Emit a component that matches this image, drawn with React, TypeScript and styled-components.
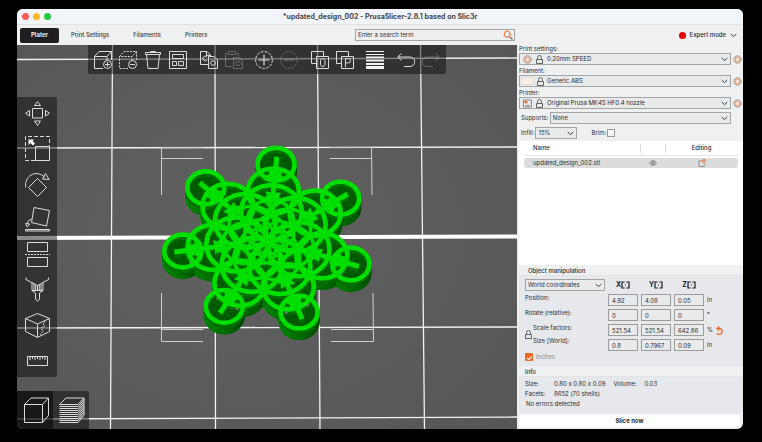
import React from "react";
import styled, { createGlobalStyle } from "styled-components";

const GlobalStyle = createGlobalStyle`
  * { box-sizing: border-box; }
  body { margin: 0; background: #000; }
  body, button, input, select, table {
    font-family: Inter, "Liberation Sans", sans-serif;
    font-size: 6px;
    line-height: 8px;
    font-feature-settings: "calt" 0;
    color: #2b2c2e;
  }
  button, input, select { border: 0; margin: 0; padding: 0; background: none; outline: none; }
  svg { display: block; flex: none; }
`;

const Page = styled.div`
  min-height: 100vh;
  padding: 9px 19px 13px 17px;
  display: flex;
`;

const Window = styled.div`
  flex: 1;
  min-width: 0;
  display: flex;
  flex-direction: column;
  background: #eff0f2;
  border-radius: 6px;
  overflow: hidden;
`;

const TitleBar = styled.header`
  display: grid;
  grid-template-columns: 1fr auto 1fr;
  align-items: center;
  height: 16px;
  padding: 0 5px;
  background: #f1f4f9;
  border-bottom: 1px solid #dfe1e4;
`;

const Lights = styled.div`
  display: flex;
  gap: 4px;
`;

const Light = styled.span<{ $color: string }>`
  width: 7px;
  height: 7px;
  border-radius: 50%;
  background: ${(p) => p.$color};
`;

const Title = styled.h1`
  margin: 0;
  font-size: 7px;
  font-weight: 700;
  color: #45474b;
`;

const Columns = styled.div`
  display: grid;
  grid-template-columns: minmax(0, 1fr) 226px;
`;

const TabBar = styled(Columns)`
  height: 20px;
  align-items: center;
`;

const Tabs = styled.nav`
  display: flex;
  align-items: center;
  padding: 0 2px 0 3px;
`;

const Tab = styled.button<{ $active?: boolean }>`
  height: 15px;
  padding: 0 ${(p) => (p.$active ? 11 : 12)}px;
  border-radius: 2px;
  font-weight: ${(p) => (p.$active ? 600 : 500)};
  color: ${(p) => (p.$active ? "#fff" : "#3a3b3d")};
  background: ${(p) => (p.$active ? "#1f1f21" : "transparent")};
`;

const Field = styled.label<{ $width?: number }>`
  display: flex;
  align-items: center;
  gap: 4px;
  height: 12px;
  padding: 0 2px;
  border: 1px solid #a3a4a6;
  background: #e9eaeb;
  min-width: 0;
  ${(p) => (p.$width ? `width: ${p.$width}px;` : "flex: 1;")}
`;

const Search = styled(Field)`
  flex: none;
  margin-left: auto;
  background: #eeeff0;
  padding-right: 1px;
`;

const TextInput = styled.input`
  flex: 1;
  min-width: 0;
  &::placeholder { color: #2d2e30; opacity: 1; }
`;

const Select = styled.select`
  flex: 1;
  min-width: 0;
  appearance: none;
`;

const Mode = styled.button`
  display: flex;
  align-items: center;
  gap: 4px;
  justify-self: end;
  margin-right: 6px;
  font-weight: 500;
`;

const Dot = styled.span`
  width: 7px;
  height: 7px;
  border-radius: 50%;
  background: #e80000;
`;

const Main = styled(Columns)`
  flex: 1;
`;

const Viewport = styled.main`
  position: relative;
  overflow: hidden;
  background: #5b5b5b;
`;

const Scene = styled.svg`
  position: absolute;
  inset: 0;
  width: 100%;
  height: 100%;
`;

const Overlay = styled.div`
  position: absolute;
  display: flex;
  background: rgba(4, 4, 4, 0.46);
  svg { fill: none; stroke: #dcdcdc; stroke-width: 1; }
`;

const TopTools = styled(Overlay)`
  top: 0;
  left: 71px;
  width: 358px;
  height: 29px;
  padding: 0 6px;
  align-items: center;
  justify-content: space-between;
  border-radius: 0 0 2px 2px;
`;

const ToolGroup = styled.div`
  display: flex;
  gap: 7px;
`;

const Tool = styled.button<{ $size: number }>`
  width: ${(p) => p.$size}px;
  height: ${(p) => p.$size}px;
  &:disabled { opacity: 0.32; }
`;

const SideTools = styled(Overlay)`
  top: 52px;
  left: 0;
  width: 40px;
  height: 280px;
  padding: 4px 0;
  flex-direction: column;
  align-items: center;
  justify-content: space-between;
  border-radius: 0 2px 2px 0;
`;

const ViewTools = styled(Overlay)`
  left: 0;
  bottom: 0;
  border-radius: 0 2px 0 0;
`;

const ViewTool = styled.button<{ $active?: boolean }>`
  width: 36px;
  height: 38px;
  padding: 6px;
  background: ${(p) => (p.$active ? "rgba(0, 0, 0, 0.5)" : "transparent")};
`;

const Sidebar = styled.aside`
  display: flex;
  flex-direction: column;
  padding: 0 0 2px 2px;
  min-width: 0;
`;

const Presets = styled.section`
  display: flex;
  flex-direction: column;
  gap: 2px;
`;

const Preset = styled.div`
  display: grid;
  grid-template-columns: 1fr 12px;
`;

const PresetName = styled.label`
  grid-column: 1 / -1;
`;

const PresetField = styled(Field)<{ $wideIcon?: boolean }>`
  padding-left: ${(p) => (p.$wideIcon ? 1 : 3)}px;
  gap: ${(p) => (p.$wideIcon ? 3 : 4)}px;
`;

const IconButton = styled.button`
  display: grid;
  place-items: center;
`;

const Swatch = styled.span`
  width: 13px;
  height: 8px;
  background: #fdeee5;
  border: 1px solid #e6dcd6;
`;

const OptionRow = styled.div`
  display: flex;
  align-items: center;
  gap: 1px;
  margin-top: 3px;
  padding: 0 12px 0 2px;
`;

const BrimLabel = styled.label`
  margin-left: 13px;
`;

const Check = styled.input`
  appearance: none;
  width: 8px;
  height: 8px;
  background: #f4f4f5;
  border: 1px solid #999a9c;
`;

const ListPane = styled.section`
  flex: 1;
  margin-top: 2px;
  padding: 0 5px;
  background: #fff;
`;

const ObjectTable = styled.table`
  width: 100%;
  border-collapse: separate;
  border-spacing: 0;
  table-layout: fixed;
  tbody::before { content: ""; display: block; height: 2px; }
`;

const Head = styled.th<{ $width?: number; $divider?: boolean; $start?: boolean }>`
  height: 15px;
  padding: ${(p) => (p.$start ? "0 0 0 9px" : "0")};
  width: ${(p) => (p.$width ? `${p.$width}px` : "auto")};
  text-align: ${(p) => (p.$start ? "left" : "center")};
  font-weight: 500;
  border-bottom: 1px solid #e6e6e8;
  background: ${(p) =>
    p.$divider ? "linear-gradient(#dedede, #dedede) left center / 1px 9px no-repeat" : "none"};
`;

const ObjectRow = styled.tr`
  td {
    height: 10px;
    padding: 0;
    background: #dcdcdd;
  }
  td:first-child { padding-left: 9px; border-radius: 3px 0 0 3px; }
  td:last-child { border-radius: 0 3px 3px 0; }
  svg { margin: 0 auto; }
`;

const GroupTitle = styled.h2<{ $indent: number }>`
  margin: 2px 0 0;
  padding-left: ${(p) => p.$indent}px;
  font-size: 6px;
  line-height: 8px;
  font-weight: 500;
`;

const Group = styled.section`
  background: #e6e8eb;
  border: 1px solid #e2e4e7;
  border-right: 0;
  border-radius: 3px 0 0 3px;
  padding: 3px 5px 4px;
`;

const Manipulation = styled.div`
  display: grid;
  grid-template-columns: 80px 30px 30px 30px 1fr;
  column-gap: 3px;
  row-gap: 3px;
  align-items: center;
`;

const Name = styled.span`
  align-self: start;
`;

const Axis = styled.span`
  display: flex;
  align-items: center;
  justify-content: center;
  font-weight: 700;
  font-size: 7px;
  color: #1c1c1d;
`;

const NumberBox = styled.input`
  width: 100%;
  height: 12px;
  padding: 0 3px;
  border: 1px solid #9b9c9e;
  background: #e9eaec;
`;

const Unit = styled.span`
  display: flex;
  align-items: center;
  gap: 3px;
  height: 12px;
`;

const ScaleNames = styled.div`
  grid-row: span 2;
  align-self: start;
  display: flex;
  align-items: center;
  gap: 1px;
`;

const Stack = styled.div`
  display: flex;
  flex-direction: column;
  gap: 5px;
`;

const InchesLabel = styled.label`
  display: flex;
  align-items: center;
  gap: 3px;
  margin-top: 2px;
  color: #8b8c8f;
`;

const Tick = styled.input`
  appearance: none;
  width: 8px;
  height: 8px;
  border-radius: 1px;
  background: #ea6a25;
  display: grid;
  place-items: center;
  &::after {
    content: "";
    width: 4px;
    height: 2px;
    border: solid #fff;
    border-width: 0 0 1px 1px;
    transform: rotate(-45deg);
  }
`;

const Info = styled.dl`
  display: grid;
  grid-template-columns: 29px auto auto 1fr;
  row-gap: 2px;
  margin: 0;
  dt, dd { margin: 0; padding-right: 8px; white-space: nowrap; }
`;

const Status = styled.p`
  margin: 2px 0 0 1px;
`;

const Slice = styled.button`
  height: 12px;
  margin: 2px 3px 0 0;
  border-radius: 2px;
  background: #fff;
  font-weight: 700;
`;

const Chevron = () => (
  <svg width="7" height="5" viewBox="0 0 7 5" fill="none" stroke="#3b3c3e">
    <path d="M.7 1 3.5 3.6 6.3 1" />
  </svg>
);

const Lock = () => (
  <svg width="7" height="9" viewBox="0 0 7 9" fill="none" stroke="#626365">
    <path d="M1.600 4.500V2.400a1.900 1.900 0 0 1 3.800 0v2.100" />
    <path d="M.5 4.500h6v4h-6z" />
  </svg>
);

const Gear = () => (
  <svg width="9" height="9" viewBox="0 0 9 9" fill="none">
    <circle cx="4.500" cy="4.500" r="3.700" stroke="#86807c" strokeDasharray="1.500 .6" />
    <circle cx="4.500" cy="4.500" r="2.500" stroke="#ef9a6d" strokeWidth="1.200" fill="#f7e3d8" />
  </svg>
);

const PrinterGlyph = () => (
  <svg width="9" height="9" viewBox="0 0 9 9" fill="none" stroke="#858688">
    <path d="M.5 1h8v7h-8zM2.500 6.500h4" />
    <path d="M1.500 3.200h3" stroke="#ea6a25" strokeWidth="2.200" />
  </svg>
);

const SearchGlyph = () => (
  <svg width="10" height="10" viewBox="0 0 10 10" fill="none">
    <circle cx="4.200" cy="4.200" r="3" stroke="#ec8146" strokeWidth="1.200" />
    <path d="m6.200 6.200 1.600 1.600" stroke="#ec8146" strokeWidth="1.300" />
    <path d="m7.500 7.500 2 2" stroke="#6b6b6b" strokeWidth="1.300" />
  </svg>
);

const topGroups: { label: string; off?: boolean; art: React.ReactNode }[][] = [
  [
    {
      label: "Add",
      art: (
        <>
          <path d="M9 17.500H.5v-12h12.500v4M.5 5.500 5 .5h12.500L13 5.500M17.500.5V9" />
          <circle cx="13.500" cy="13.500" r="4" />
          <path d="M11 13.500h5M13.500 11v5" />
        </>
      ),
    },
    {
      label: "Delete",
      art: (
        <>
          <path strokeDasharray="2 1.200" d="M9 17.500H.5v-12h12.500v4M.5 5.500 5 .5h12.500L13 5.500M17.500.5V9" />
          <circle cx="13.500" cy="13.500" r="4" />
          <path d="M11 13.500h5" />
        </>
      ),
    },
    {
      label: "Delete all",
      art: <path d="M1.500 3.500h15v-2h-15zM6.500 1.500v-1h5v1M2.500 3.500l1.500 14h10l1.500-14" />,
    },
    {
      label: "Arrange",
      art: <path d="M.5.5h17v17H.5zM3.500 3.500h11v4h-11zM3.500 10.500h4v4h-4zM9.500 10.500h5v4h-5z" />,
    },
  ],
  [
    {
      label: "Copy",
      art: (
        <>
          <path d="M8.500 13.500h-8V.5h6.500l3.500 3.500v1.500M6.500.5v4h4M8.500 5.500h5.500l3.500 3.500v8.500h-9z" />
          <circle cx="13" cy="12" r="2.300" />
          <path d="M7 6a2.300 2.300 0 1 0 0 3" />
        </>
      ),
    },
    {
      label: "Paste",
      off: true,
      art: (
        <>
          <path d="M7.500 15.500h-7v-13h3M10.500 2.500h3v3M3.500.5h7v3h-7zM8.500 6.500h5.500l3.500 3v8h-9z" />
          <circle cx="13" cy="12.500" r="2.300" />
        </>
      ),
    },
  ],
  [
    {
      label: "Add instance",
      art: (
        <>
          <circle cx="9" cy="9" r="8.400" strokeDasharray="2.800 1.200" />
          <path d="M3.500 9h11M9 3.500v11" strokeWidth="1.200" />
        </>
      ),
    },
    {
      label: "Remove instance",
      off: true,
      art: (
        <>
          <circle cx="9" cy="9" r="8.400" strokeDasharray="2.800 1.200" />
          <path d="M3.500 9h11" strokeWidth="1.200" />
        </>
      ),
    },
  ],
  [
    {
      label: "Split to objects",
      art: (
        <>
          <path d="M5 12.500H.5V.5h12V5M5.500 5.500h12v12h-12z" />
          <rect x="9.500" y="7.500" width="4.500" height="8" rx="2.200" />
        </>
      ),
    },
    {
      label: "Split to parts",
      art: <path d="M5 12.500H.5V.5h12V5M5.500 5.500h12v12h-12zM9.500 16v-8.500h3q2 0 2 2.200t-2 2.200h-3" />,
    },
  ],
  [
    {
      label: "Variable layer height",
      art: (
        <g stroke="#f4f4f4">
          <path d="M0 .5h18M0 3.500h18" />
          <path strokeWidth="1.500" d="M0 6.250h18" />
          <path strokeWidth="2" d="M0 9.500h18M0 13h18" />
          <path strokeWidth="3" d="M0 16.500h18" />
        </g>
      ),
    },
  ],
  [
    { label: "Undo", art: <path d="M4.500 2.500.8 6l3.700 3.500M1 6h12a4.600 4.600 0 0 1 0 9.500H7" /> },
    { label: "Redo", off: true, art: <path d="m13.500 2.500 3.700 3.500-3.700 3.500M17 6H5a4.600 4.600 0 0 0 0 9.500h6" /> },
  ],
];

const sideTools: { label: string; art: React.ReactNode }[] = [
  {
    label: "Move",
    art: <path d="M7.500 7.500h10v9.500h-10zM9.500 4.500h6L12.500.5zM9.500 20h6l-3 4.500zM4.500 9.500V15l-4-2.750zM20.500 9.500V15l4-2.750z" />,
  },
  {
    label: "Scale",
    art: (
      <>
        <path strokeDasharray="4 2" d="M10 24.500H.5V.5h24V10" />
        <path d="M10.500 10.500h14v14h-14z" />
        <path fill="#fff" stroke="none" d="M3.500 3.500h5.500L7.500 5l2.500 2.500-2 2L5.500 7 3.500 9z" />
      </>
    ),
  },
  {
    label: "Rotate",
    art: <path d="M12.500 6.500 21.500 15.500l-9 9-9-9zM.7 15.500C-1 4 11-3 19.500 5M20.500 1.500 24 7.500l-6.500-.5z" />,
  },
  {
    label: "Place on face",
    art: <path d="M9 .5 24.500 3.500l-3 15.500L6.500 15.500zM.5 22.500h24v1.500H.5zM6.500 12Q2.500 13 2.200 17M.5 16.500l1.700 3.500 2.500-3z" />,
  },
  {
    label: "Cut",
    art: (
      <>
        <path d="M2.500.5h20v9h-20zM2.500 15.500h20v9h-20z" />
        <path strokeDasharray="2 1" d="M0 12.500h25" />
      </>
    ),
  },
  {
    label: "Paint-on supports",
    art: <path d="M1 .5v2L12.500 8.500 23.500 2.500v-2M7 5.500v8h11v-8M9 7v6M10.700 8v5M12.500 9v4M14.300 8v5M16 7v6M7 13.500l3.500 2.500v6q2 4 4 0v-6l3.500-2.500" />,
  },
  {
    label: "Seam painting",
    art: (
      <>
        <path d="M12.500.5 24.500 5.500V18.500l-12 6-12-6V5.500zM.5 5.500 12.500 11 24.500 5.500M12.500 11v13" />
        <path strokeDasharray="2 1" d="m20 8-2 3 2 2-4 2 2 3-3 4" />
      </>
    ),
  },
  {
    label: "Measure",
    art: <path d="M2.500 8.500h20v9h-20zM5 9v3M7.500 9v2M10 9v3M12.500 9v2M15 9v3M17.500 9v2M20 9v3" />,
  },
];

const CX = 268.5;
const CY = 240.5;
const TILT = 0.885;
const ARMS = Array.from({ length: 7 }, (_, i) => ((5 + (i * 360) / 7) * Math.PI) / 180);
const OUTLINE = [
  { d: 86.5, r: 18.5, w: 4.6 },
  { d: 56, r: 25.5, w: 4.6 },
  { d: 32, r: 30.5, w: 4.6 },
];
const RINGS = [...OUTLINE, { d: 23, r: 23, w: 3.4 }, { d: 14, r: 14, w: 2.6 }];

const point = (angle: number, d: number) => [CX + Math.sin(angle) * d, CY - Math.cos(angle) * d * TILT];

const star = (angle: number, d: number, long: number, short: number) =>
  Array.from({ length: 14 }, (_, k) => {
    const [x, y] = point(angle, d);
    const t = angle + (k * Math.PI) / 7;
    const r = k % 2 ? short : long;
    return `${(x + Math.sin(t) * r).toFixed(2)},${(y - Math.cos(t) * r * TILT).toFixed(2)}`;
  }).join(" ");

const Lattice = ({ color }: { color: string }) => (
  <g fill="none" stroke={color}>
    {ARMS.map((a) => {
      const [x1, y1] = point(a, 56);
      const [x2, y2] = point(a, 95);
      return (
        <g key={a}>
          {RINGS.map(({ d, r, w }) => {
            const [x, y] = point(a, d);
            return <ellipse key={d} cx={x} cy={y} rx={r} ry={r * TILT} strokeWidth={w} />;
          })}
          <path d={`M${x1} ${y1}L${x2} ${y2}`} strokeWidth="5" />
          <polygon points={star(a, 49, 10, 6)} fill={color} stroke="none" />
          <polygon points={star(a, 74, 9, 6)} fill={color} stroke="none" />
        </g>
      );
    })}
    <ellipse cx={CX} cy={CY} rx="5" ry="4.500" fill={color} stroke="none" />
  </g>
);

const Discs = ({ grow = 0, lift = 0, fill }: { grow?: number; lift?: number; fill: string }) => (
  <g transform={`translate(0 ${lift})`} fill={fill}>
    {ARMS.map((a) =>
      OUTLINE.map(({ d, r }) => {
        const [x, y] = point(a, d);
        return <ellipse key={`${a}-${d}`} cx={x} cy={y} rx={r + grow} ry={(r + grow) * TILT} />;
      })
    )}
  </g>
);

const Bed = () => (
  <Scene viewBox="17 45 500 384" preserveAspectRatio="xMidYMid slice" role="img" aria-label="Print bed">
    <defs>
      <radialGradient id="bed" cx=".45" cy=".5" r=".75">
        <stop offset="0" stopColor="#616161" />
        <stop offset="1" stopColor="#565656" />
      </radialGradient>
      <linearGradient id="wall">
        <stop offset="0" stopColor="#008600" />
        <stop offset=".5" stopColor="#006c00" />
        <stop offset="1" stopColor="#004a00" />
      </linearGradient>
    </defs>
    <rect x="17" y="45" width="500" height="384" fill="url(#bed)" />
    <g stroke="#f2f2f2" strokeWidth="1.300">
      <path d="M112.500 45 110.500 429M215 45l.5 384M317.500 45 320 429M420.500 45l4 384" />
      <path d="M17 59.500 517 58M17 148l500-1M17 328l500-1M17 419l500-2" />
      <path d="m17 238 500-1.500" strokeWidth="4" stroke="#fff" />
    </g>
    <g stroke="#cfcfcf" fill="none">
      <path d="M203 147.500h-41.500V195M161.500 158.500H203M330 147.500h41.500l.5 47.500M330 158.500h41.500" />
      <path d="M161.500 293v48.500H203M161.500 329.500H203M373 293l.5 48.500H331M331 329.500h42" />
    </g>
    {[10, 9, 8, 7, 6, 5, 4, 3, 2, 1].map((dy) => (
      <Discs key={dy} grow={2.1} lift={dy} fill="url(#wall)" />
    ))}
    <Discs fill="#005a00" />
    <g transform="translate(0 3)">
      <Lattice color="#006e00" />
    </g>
    <g fill="#747474">
      {ARMS.flatMap((a) =>
        [-0.14, 0.14].map((side) => {
          const [x, y] = point(a + side, 81);
          return <circle key={`${a}${side}`} cx={x} cy={y + 2} r="1.400" />;
        })
      )}
    </g>
    <Lattice color="#00df00" />
  </Scene>
);

const presets = [
  { id: "print", name: "Print settings:", value: "0.20mm SPEED", icon: <Gear /> },
  { id: "filament", name: "Filament:", value: "Generic ABS", icon: <Swatch /> },
  { id: "printer", name: "Printer:", value: "Original Prusa MK4S HF0.4 nozzle", icon: <PrinterGlyph /> },
];

const Values = ({ name, values, unit }: { name: string; values: string[]; unit: React.ReactNode }) => (
  <>
    {values.map((v, i) => (
      <NumberBox key={i} aria-label={`${name} ${"XYZ"[i]}`} defaultValue={v} />
    ))}
    <Unit>{unit}</Unit>
  </>
);

export default function App() {
  return (
    <Page>
      <GlobalStyle />
      <Window>
        <TitleBar>
          <Lights>
            <Light $color="#ff5c55" />
            <Light $color="#fdb927" />
            <Light $color="#27c840" />
          </Lights>
          <Title>*updated_design_002 - PrusaSlicer-2.8.1 based on Slic3r</Title>
        </TitleBar>
        <TabBar>
          <Tabs>
            <Tab $active>Plater</Tab>
            <Tab>Print Settings</Tab>
            <Tab>Filaments</Tab>
            <Tab>Printers</Tab>
            <Search $width={160}>
              <TextInput aria-label="Search" placeholder="Enter a search term" />
              <SearchGlyph />
            </Search>
          </Tabs>
          <Mode>
            <Dot />
            Expert mode
            <Chevron />
          </Mode>
        </TabBar>
        <Main>
          <Viewport>
            <Bed />
            <TopTools>
              {topGroups.map((group) => (
                <ToolGroup key={group[0].label}>
                  {group.map(({ label, off, art }) => (
                    <Tool key={label} $size={18} aria-label={label} disabled={off}>
                      <svg width="18" height="18" viewBox="0 0 18 18">{art}</svg>
                    </Tool>
                  ))}
                </ToolGroup>
              ))}
            </TopTools>
            <SideTools>
              {sideTools.map(({ label, art }) => (
                <Tool key={label} $size={25} aria-label={label}>
                  <svg width="25" height="25" viewBox="0 0 25 25">{art}</svg>
                </Tool>
              ))}
            </SideTools>
            <ViewTools>
              <ViewTool $active aria-label="3D editor view">
                <svg width="26" height="26" viewBox="0 0 26 26">
                  <path d="M1.500 7.500h18v18h-18zM1.500 7.500 8 1h17.500l-6 6.500M25.500 1v17.500l-6 7" />
                </svg>
              </ViewTool>
              <ViewTool aria-label="Preview">
                <svg width="26" height="26" viewBox="0 0 26 26">
                  <path d="M.5 7.500 7 1h18l-6 6.500zM25 1v17" />
                  {[9.5, 11.5, 13.5, 15.5, 17.5, 19.5, 21.5, 23.5, 25.5].map((y) => (
                    <path key={y} d={`M.5 ${y}H19l6-7`} />
                  ))}
                </svg>
              </ViewTool>
            </ViewTools>
          </Viewport>
          <Sidebar>
            <Presets>
              {presets.map(({ id, name, value, icon }) => (
                <Preset key={id}>
                  <PresetName htmlFor={id}>{name}</PresetName>
                  <PresetField as="div" $wideIcon={id === "filament"}>
                    {icon}
                    <Lock />
                    <Select id={id}>
                      <option>{value}</option>
                    </Select>
                    <Chevron />
                  </PresetField>
                  <IconButton aria-label={`Edit ${name}`}>
                    <Gear />
                  </IconButton>
                </Preset>
              ))}
            </Presets>
            <OptionRow>
              <label htmlFor="supports">Supports:</label>
              <Field as="div">
                <Select id="supports">
                  <option>None</option>
                </Select>
                <Chevron />
              </Field>
            </OptionRow>
            <OptionRow>
              <label htmlFor="infill">Infill:</label>
              <Field as="div" $width={42}>
                <Select id="infill">
                  <option>15%</option>
                </Select>
                <Chevron />
              </Field>
              <BrimLabel htmlFor="brim">Brim:</BrimLabel>
              <Check id="brim" type="checkbox" />
            </OptionRow>
            <ListPane>
              <ObjectTable>
                <thead>
                  <tr>
                    <Head $start>Name</Head>
                    <Head $width={25} $divider aria-label="Visible" />
                    <Head $width={73} $divider>Editing</Head>
                  </tr>
                </thead>
                <tbody>
                  <ObjectRow>
                    <td>updated_design_002.stl</td>
                    <td>
                      <svg width="8" height="6" viewBox="0 0 8 6" fill="none" stroke="#6d6d6f" strokeWidth=".9">
                        <path d="M.5 3Q4-1.500 7.500 3 4 7.500.5 3z" />
                        <circle cx="4" cy="3" r="1.100" />
                      </svg>
                    </td>
                    <td>
                      <svg width="8" height="8" viewBox="0 0 8 8" fill="none" stroke="#858587" strokeWidth=".8">
                        <path d="M4 1.800H.8v5.700h5.500V4.500" />
                        <circle cx="6" cy="2" r="1.400" stroke="#ee7b3f" strokeWidth="1.100" />
                      </svg>
                    </td>
                  </ObjectRow>
                </tbody>
              </ObjectTable>
            </ListPane>
            <GroupTitle $indent={9}>Object manipulation</GroupTitle>
            <Group>
              <Manipulation>
                <Field>
                  <Select aria-label="Coordinate system">
                    <option>World coordinates</option>
                  </Select>
                  <Chevron />
                </Field>
                {["X", "Y", "Z"].map((axis) => (
                  <Axis key={axis}>
                    {axis}
                    <svg width="9" height="8" viewBox="0 0 9 8" fill="none" stroke="#1c1c1d" strokeWidth="1.200">
                      <path d="M3.700 1H1v6h2.700M5.300 1H8v6H5.300M4 4h1" />
                    </svg>
                  </Axis>
                ))}
                <span />
                <Name>Position:</Name>
                <Values name="Position" values={["4.92", "4.08", "0.05"]} unit="in" />
                <Name>Rotate (relative):</Name>
                <Values name="Rotate" values={["0", "0", "0"]} unit="°" />
                <ScaleNames>
                  <Lock />
                  <Stack>
                    <span>Scale factors:</span>
                    <span>Size [World]:</span>
                  </Stack>
                </ScaleNames>
                <Values
                  name="Scale"
                  values={["521.54", "521.54", "642.86"]}
                  unit={
                    <>
                      %
                      <IconButton aria-label="Reset scale">
                        <svg width="8" height="9" viewBox="0 0 8 9" fill="none" stroke="#ea6a25" strokeWidth="1.300">
                          <path d="M.8 7.300a3 3 0 1 0 1.700-4.800H1M3.300.5 1 2.500l2.300 2" />
                        </svg>
                      </IconButton>
                    </>
                  }
                />
                <Values name="Size" values={["0.8", "0.7967", "0.09"]} unit="in" />
              </Manipulation>
              <InchesLabel>
                <Tick type="checkbox" defaultChecked />
                Inches
              </InchesLabel>
            </Group>
            <GroupTitle $indent={6}>Info</GroupTitle>
            <Group>
              <Info>
                <dt>Size:</dt>
                <dd>0.80 x 0.80 x 0.09</dd>
                <dt>Volume:</dt>
                <dd>0.03</dd>
                <dt>Facets:</dt>
                <dd>8652 (70 shells)</dd>
              </Info>
              <Status>No errors detected</Status>
            </Group>
            <Slice>Slice now</Slice>
          </Sidebar>
        </Main>
      </Window>
    </Page>
  );
}
